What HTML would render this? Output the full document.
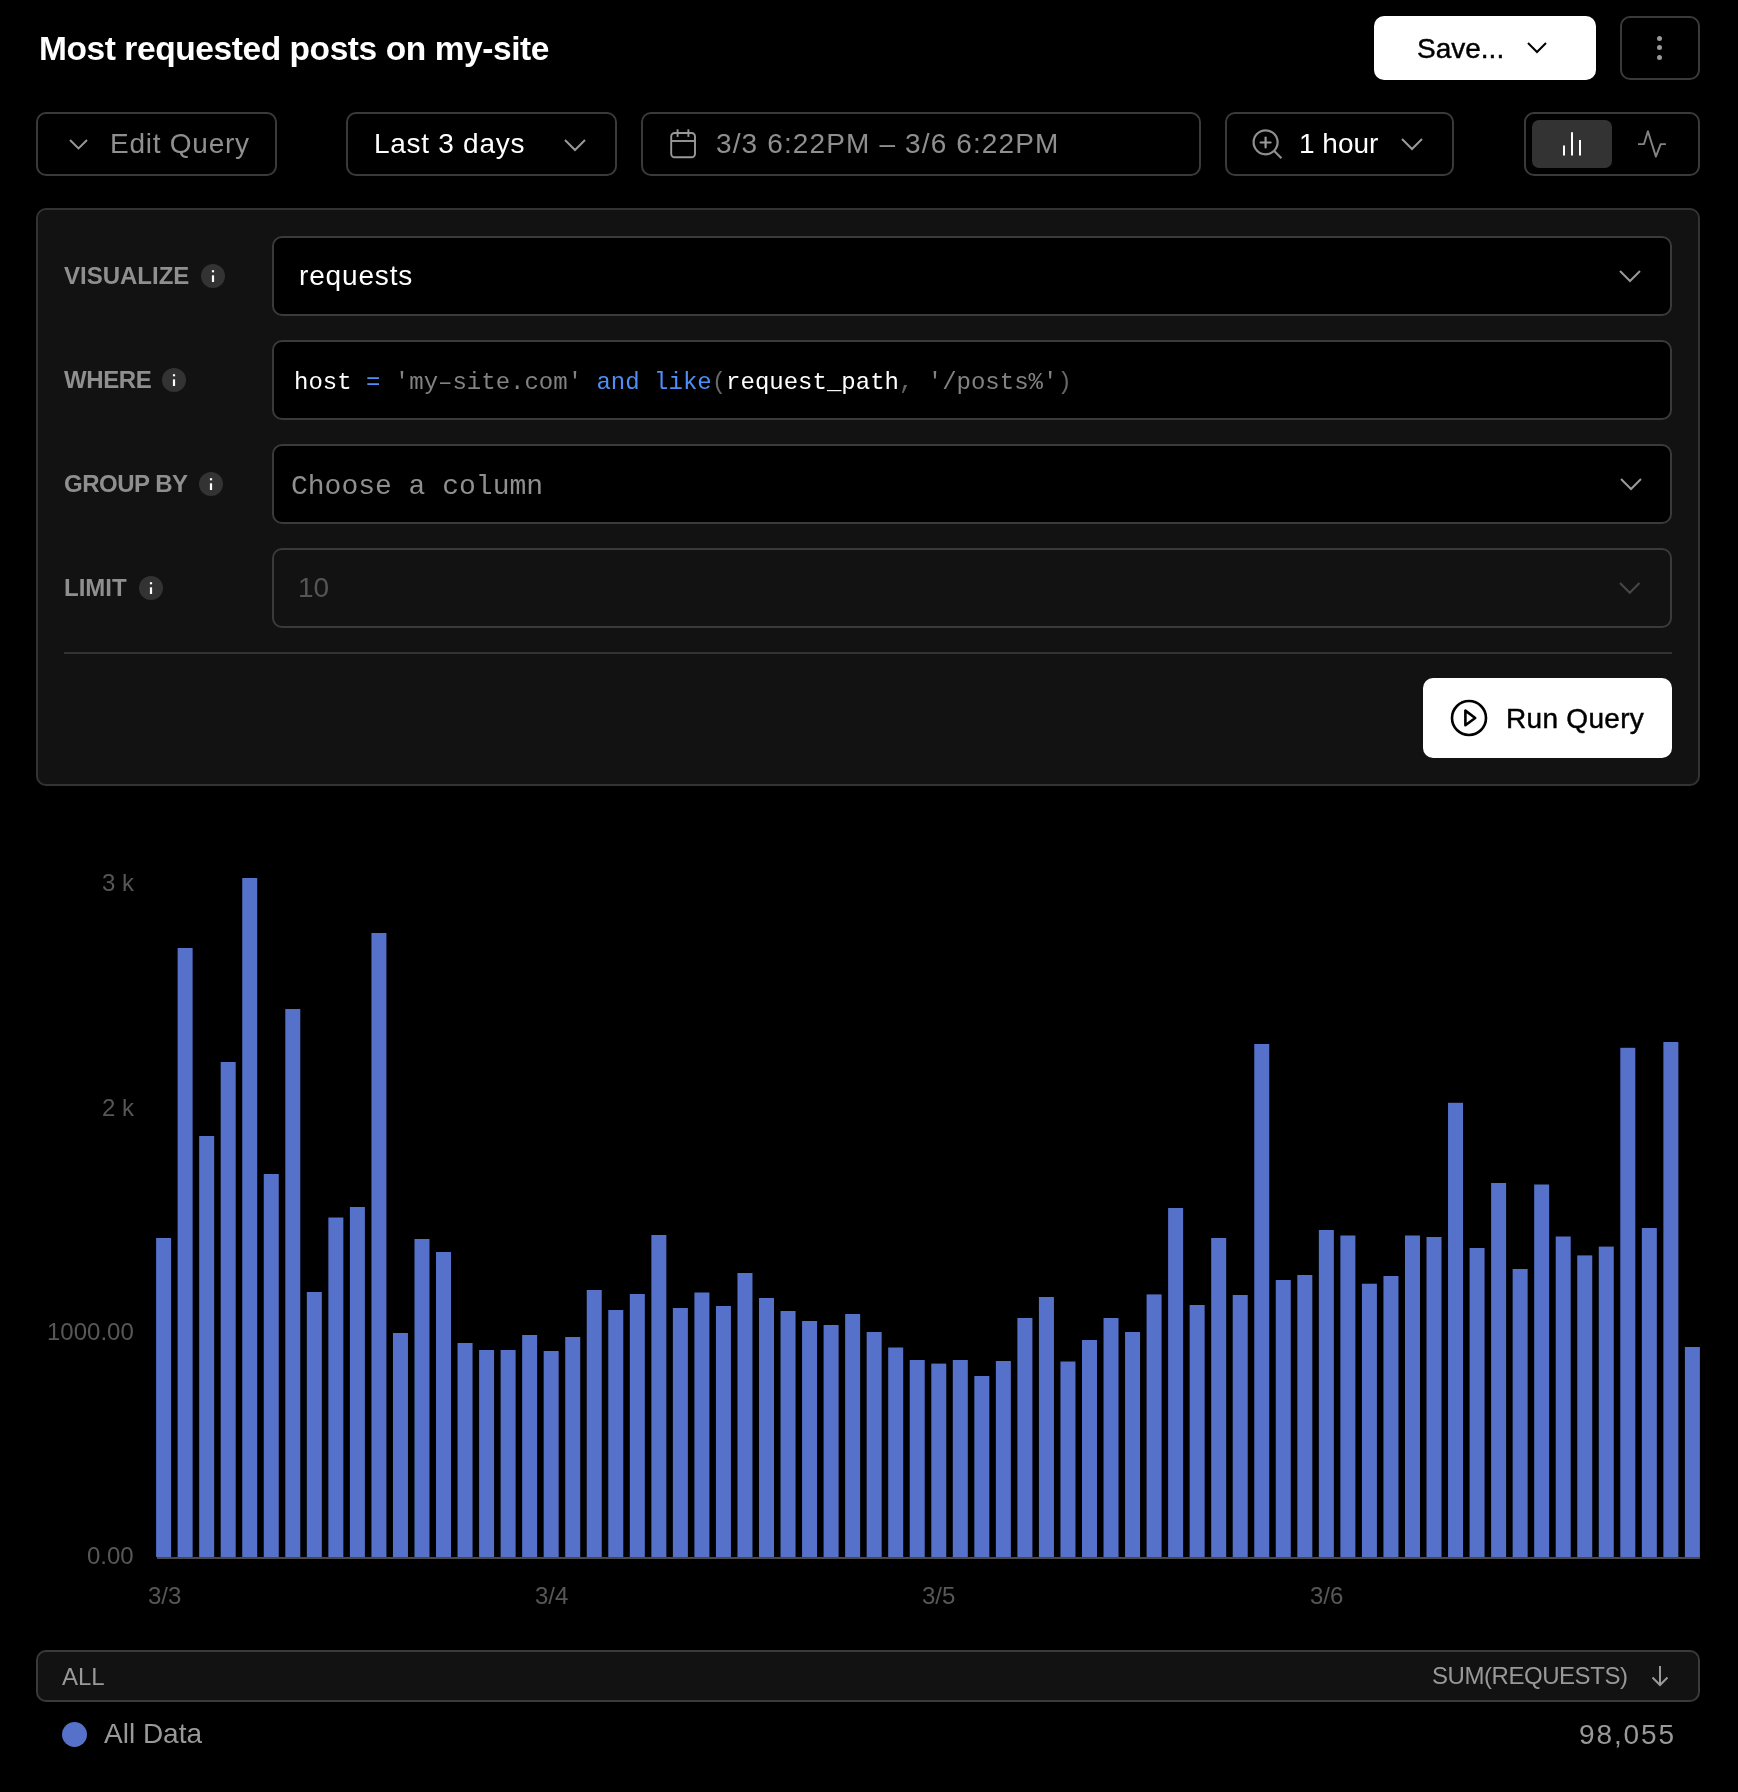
<!DOCTYPE html>
<html><head><meta charset="utf-8"><style>
html,body{margin:0;padding:0;background:#000;font-family:'Liberation Sans',sans-serif;width:1738px;height:1792px;overflow:hidden;position:relative}
.t{position:absolute;white-space:pre;will-change:transform}
.b{position:absolute;box-sizing:border-box}
.s{position:absolute;overflow:visible}
</style></head><body>
<div class="t" style="left:38.5px;top:28.69px;font-size:33.5px;line-height:40px;color:#fff;font-weight:700;font-family:'Liberation Sans', sans-serif;letter-spacing:-0.42px;">Most requested posts on my-site</div>
<div class="b" style="left:1374px;top:16px;width:222px;height:64px;background:#fff;border:none;border-radius:10px;"></div>
<div class="t" style="left:1417px;top:31.59px;font-size:28px;line-height:34px;color:#000;font-weight:400;font-family:'Liberation Sans', sans-serif;-webkit-text-stroke:0.45px #000;">Save...</div>
<svg class="s" style="left:1526.0px;top:41.3px" width="22" height="13"><polyline points="2,2 11.0,11 20,2" fill="none" stroke="#000" stroke-width="2"/></svg>
<div class="b" style="left:1620px;top:16px;width:80px;height:64px;background:transparent;border:2px solid #3a3a3a;border-radius:10px;"></div>
<div class="b" style="left:1657.2px;top:36.2px;width:5px;height:5px;border-radius:50%;background:#999"></div>
<div class="b" style="left:1657.2px;top:45.3px;width:5px;height:5px;border-radius:50%;background:#999"></div>
<div class="b" style="left:1657.2px;top:54.9px;width:5px;height:5px;border-radius:50%;background:#999"></div>
<div class="b" style="left:36px;top:112px;width:241px;height:64px;background:transparent;border:2px solid #3a3a3a;border-radius:10px;"></div>
<svg class="s" style="left:67.5px;top:137.75px" width="21" height="12.5"><polyline points="2,2 10.5,10.5 19,2" fill="none" stroke="#999" stroke-width="1.9"/></svg>
<div class="t" style="left:110px;top:127.29px;font-size:28px;line-height:34px;color:#8f8f8f;font-weight:400;font-family:'Liberation Sans', sans-serif;letter-spacing:0.75px;">Edit Query</div>
<div class="b" style="left:346px;top:112px;width:271px;height:64px;background:transparent;border:2px solid #3a3a3a;border-radius:10px;"></div>
<div class="t" style="left:373.5px;top:126.99px;font-size:28px;line-height:34px;color:#fff;font-weight:400;font-family:'Liberation Sans', sans-serif;letter-spacing:0.72px;">Last 3 days</div>
<svg class="s" style="left:563.0px;top:137.5px" width="24" height="14"><polyline points="2,2 12.0,12 22,2" fill="none" stroke="#999" stroke-width="2"/></svg>
<div class="b" style="left:641px;top:112px;width:560px;height:64px;background:transparent;border:2px solid #3a3a3a;border-radius:10px;"></div>
<svg class="s" style="left:668px;top:128px" width="30" height="32"><rect x="3.2" y="5" width="23.8" height="24.3" rx="3.5" fill="none" stroke="#999" stroke-width="1.9"/><line x1="3.2" y1="13" x2="27" y2="13" stroke="#999" stroke-width="1.9"/><line x1="9.6" y1="1.3" x2="9.6" y2="8.9" stroke="#999" stroke-width="1.9"/><line x1="20.4" y1="1.3" x2="20.4" y2="8.9" stroke="#999" stroke-width="1.9"/></svg>
<div class="t" style="left:716px;top:127.29px;font-size:28px;line-height:34px;color:#8f8f8f;font-weight:400;font-family:'Liberation Sans', sans-serif;letter-spacing:1.13px;">3/3 6:22PM – 3/6 6:22PM</div>
<div class="b" style="left:1225px;top:112px;width:229px;height:64px;background:transparent;border:2px solid #3a3a3a;border-radius:10px;"></div>
<svg class="s" style="left:1248px;top:125px" width="38" height="38"><circle cx="17.6" cy="17.3" r="12" fill="none" stroke="#8f8f8f" stroke-width="2.2"/><line x1="26" y1="25.7" x2="33.5" y2="33.2" stroke="#8f8f8f" stroke-width="2.2"/><line x1="12.6" y1="17.5" x2="22.6" y2="17.5" stroke="#999" stroke-width="2.2" stroke-linecap="round"/><line x1="17.6" y1="12.5" x2="17.6" y2="22.5" stroke="#999" stroke-width="2.2" stroke-linecap="round"/></svg>
<div class="t" style="left:1299px;top:127.29px;font-size:28px;line-height:34px;color:#fff;font-weight:400;font-family:'Liberation Sans', sans-serif;">1 hour</div>
<svg class="s" style="left:1400.0px;top:137.0px" width="24" height="14"><polyline points="2,2 12.0,12 22,2" fill="none" stroke="#999" stroke-width="2"/></svg>
<div class="b" style="left:1524px;top:112px;width:176px;height:64px;background:transparent;border:2px solid #3a3a3a;border-radius:10px;"></div>
<div class="b" style="left:1532px;top:120px;width:80px;height:48px;background:#333;border:none;border-radius:7px;"></div>
<svg class="s" style="left:1555px;top:128px" width="34" height="32"><line x1="9" y1="17.5" x2="9" y2="27.6" stroke="#fff" stroke-width="2"/><line x1="17" y1="4.3" x2="17" y2="27.6" stroke="#fff" stroke-width="2"/><line x1="25" y1="12.1" x2="25" y2="27.6" stroke="#fff" stroke-width="2"/></svg>
<svg class="s" style="left:1630px;top:124px" width="44" height="40"><polyline points="8,20.1 14,20.1 17.9,7.2 25.9,32.6 30.7,20.1 35.9,20.1" fill="none" stroke="#858585" stroke-width="1.9" stroke-linejoin="round"/></svg>
<div class="b" style="left:36px;top:208px;width:1664px;height:578px;background:#121212;border:2px solid #333;border-radius:10px;"></div>
<div class="t" style="left:64px;top:261.38px;font-size:24px;line-height:29px;color:#8f8f8f;font-weight:700;font-family:'Liberation Sans', sans-serif;">VISUALIZE</div>
<div class="t" style="left:64px;top:365.38px;font-size:24px;line-height:29px;color:#8f8f8f;font-weight:700;font-family:'Liberation Sans', sans-serif;letter-spacing:-0.4px;">WHERE</div>
<div class="t" style="left:64px;top:469.38px;font-size:24px;line-height:29px;color:#8f8f8f;font-weight:700;font-family:'Liberation Sans', sans-serif;letter-spacing:-0.5px;">GROUP BY</div>
<div class="t" style="left:64px;top:573.38px;font-size:24px;line-height:29px;color:#8f8f8f;font-weight:700;font-family:'Liberation Sans', sans-serif;">LIMIT</div>
<div class="b" style="left:201px;top:264px;width:24px;height:24px;border-radius:50%;background:#333"></div><svg class="s" style="left:201px;top:264px" width="24" height="24"><rect x="10.9" y="6.2" width="2.2" height="2.1" fill="#fff"/><rect x="10.9" y="11.3" width="2.2" height="6.7" fill="#fff"/></svg>
<div class="b" style="left:162px;top:368px;width:24px;height:24px;border-radius:50%;background:#333"></div><svg class="s" style="left:162px;top:368px" width="24" height="24"><rect x="10.9" y="6.2" width="2.2" height="2.1" fill="#fff"/><rect x="10.9" y="11.3" width="2.2" height="6.7" fill="#fff"/></svg>
<div class="b" style="left:199px;top:472px;width:24px;height:24px;border-radius:50%;background:#333"></div><svg class="s" style="left:199px;top:472px" width="24" height="24"><rect x="10.9" y="6.2" width="2.2" height="2.1" fill="#fff"/><rect x="10.9" y="11.3" width="2.2" height="6.7" fill="#fff"/></svg>
<div class="b" style="left:139px;top:576px;width:24px;height:24px;border-radius:50%;background:#333"></div><svg class="s" style="left:139px;top:576px" width="24" height="24"><rect x="10.9" y="6.2" width="2.2" height="2.1" fill="#fff"/><rect x="10.9" y="11.3" width="2.2" height="6.7" fill="#fff"/></svg>
<div class="b" style="left:272px;top:236px;width:1400px;height:80px;background:#000;border:2px solid #3a3a3a;border-radius:10px;"></div>
<div class="t" style="left:299px;top:259.29px;font-size:28px;line-height:34px;color:#fff;font-weight:400;font-family:'Liberation Sans', sans-serif;letter-spacing:0.85px;">requests</div>
<svg class="s" style="left:1618.0px;top:269.0px" width="24" height="14"><polyline points="2,2 12.0,12 22,2" fill="none" stroke="#999" stroke-width="2"/></svg>
<div class="b" style="left:272px;top:340px;width:1400px;height:80px;background:#000;border:2px solid #3a3a3a;border-radius:10px;"></div>
<div class="t" style="left:294px;top:368.41px;font-size:24px;line-height:29px;color:#fff;font-weight:400;font-family:'Liberation Mono', monospace;"><span style="color:#fff">host</span> <span style="color:#4e8ef7">=</span> <span style="color:#828282">'my&#8211;site.com'</span> <span style="color:#4e8ef7">and</span> <span style="color:#4e8ef7">like</span><span style="color:#666">(</span><span style="color:#fff">request_path</span><span style="color:#666">,</span> <span style="color:#828282">'/posts%'</span><span style="color:#666">)</span></div>
<div class="b" style="left:272px;top:444px;width:1400px;height:80px;background:#000;border:2px solid #3a3a3a;border-radius:10px;"></div>
<div class="t" style="left:291px;top:469.55px;font-size:28px;line-height:34px;color:#8f8f8f;font-weight:400;font-family:'Liberation Mono', monospace;">Choose a column</div>
<svg class="s" style="left:1619.0px;top:477.0px" width="24" height="14"><polyline points="2,2 12.0,12 22,2" fill="none" stroke="#999" stroke-width="2"/></svg>
<div class="b" style="left:272px;top:548px;width:1400px;height:80px;background:#121212;border:2px solid #3a3a3a;border-radius:10px;"></div>
<div class="t" style="left:298px;top:571.29px;font-size:28px;line-height:34px;color:#555;font-weight:400;font-family:'Liberation Sans', sans-serif;">10</div>
<svg class="s" style="left:1618.25px;top:580.6px" width="23.5" height="13.8"><polyline points="2,2 11.75,11.8 21.5,2" fill="none" stroke="#474747" stroke-width="2.1"/></svg>
<div class="b" style="left:64px;top:652px;width:1608px;height:2px;background:#333"></div>
<div class="b" style="left:1423px;top:678px;width:249px;height:80px;background:#fff;border:none;border-radius:10px;"></div>
<svg class="s" style="left:1448px;top:697px" width="42" height="42"><circle cx="21" cy="21" r="17" fill="none" stroke="#000" stroke-width="2.6"/><polygon points="17.4,13.6 17.4,28.2 27.2,21" fill="none" stroke="#000" stroke-width="2.6" stroke-linejoin="round"/></svg>
<div class="t" style="left:1505.5px;top:701.69px;font-size:28px;line-height:34px;color:#000;font-weight:400;font-family:'Liberation Sans', sans-serif;letter-spacing:0.3px;-webkit-text-stroke:0.45px #000;">Run Query</div>
<svg class="s" style="left:0;top:0" width="1738" height="1792"><rect x="156.10" y="1238" width="15" height="319.00" fill="#5571c9"/><rect x="177.63" y="948" width="15" height="609.00" fill="#5571c9"/><rect x="199.16" y="1136" width="15" height="421.00" fill="#5571c9"/><rect x="220.70" y="1062" width="15" height="495.00" fill="#5571c9"/><rect x="242.23" y="878" width="15" height="679.00" fill="#5571c9"/><rect x="263.76" y="1174" width="15" height="383.00" fill="#5571c9"/><rect x="285.29" y="1009" width="15" height="548.00" fill="#5571c9"/><rect x="306.83" y="1292" width="15" height="265.00" fill="#5571c9"/><rect x="328.36" y="1217.5" width="15" height="339.50" fill="#5571c9"/><rect x="349.89" y="1207" width="15" height="350.00" fill="#5571c9"/><rect x="371.42" y="933" width="15" height="624.00" fill="#5571c9"/><rect x="392.96" y="1333" width="15" height="224.00" fill="#5571c9"/><rect x="414.49" y="1239" width="15" height="318.00" fill="#5571c9"/><rect x="436.02" y="1252" width="15" height="305.00" fill="#5571c9"/><rect x="457.55" y="1343" width="15" height="214.00" fill="#5571c9"/><rect x="479.09" y="1350" width="15" height="207.00" fill="#5571c9"/><rect x="500.62" y="1350" width="15" height="207.00" fill="#5571c9"/><rect x="522.15" y="1335" width="15" height="222.00" fill="#5571c9"/><rect x="543.68" y="1351" width="15" height="206.00" fill="#5571c9"/><rect x="565.22" y="1337" width="15" height="220.00" fill="#5571c9"/><rect x="586.75" y="1290" width="15" height="267.00" fill="#5571c9"/><rect x="608.28" y="1310" width="15" height="247.00" fill="#5571c9"/><rect x="629.81" y="1294" width="15" height="263.00" fill="#5571c9"/><rect x="651.35" y="1235" width="15" height="322.00" fill="#5571c9"/><rect x="672.88" y="1308" width="15" height="249.00" fill="#5571c9"/><rect x="694.41" y="1292.5" width="15" height="264.50" fill="#5571c9"/><rect x="715.94" y="1306" width="15" height="251.00" fill="#5571c9"/><rect x="737.47" y="1273" width="15" height="284.00" fill="#5571c9"/><rect x="759.01" y="1298" width="15" height="259.00" fill="#5571c9"/><rect x="780.54" y="1311" width="15" height="246.00" fill="#5571c9"/><rect x="802.07" y="1321" width="15" height="236.00" fill="#5571c9"/><rect x="823.60" y="1325" width="15" height="232.00" fill="#5571c9"/><rect x="845.14" y="1314" width="15" height="243.00" fill="#5571c9"/><rect x="866.67" y="1332" width="15" height="225.00" fill="#5571c9"/><rect x="888.20" y="1347.5" width="15" height="209.50" fill="#5571c9"/><rect x="909.73" y="1360" width="15" height="197.00" fill="#5571c9"/><rect x="931.27" y="1363.6" width="15" height="193.40" fill="#5571c9"/><rect x="952.80" y="1360" width="15" height="197.00" fill="#5571c9"/><rect x="974.33" y="1376" width="15" height="181.00" fill="#5571c9"/><rect x="995.86" y="1361" width="15" height="196.00" fill="#5571c9"/><rect x="1017.40" y="1318" width="15" height="239.00" fill="#5571c9"/><rect x="1038.93" y="1297" width="15" height="260.00" fill="#5571c9"/><rect x="1060.46" y="1361.5" width="15" height="195.50" fill="#5571c9"/><rect x="1081.99" y="1340" width="15" height="217.00" fill="#5571c9"/><rect x="1103.53" y="1318" width="15" height="239.00" fill="#5571c9"/><rect x="1125.06" y="1332" width="15" height="225.00" fill="#5571c9"/><rect x="1146.59" y="1294.4" width="15" height="262.60" fill="#5571c9"/><rect x="1168.12" y="1208" width="15" height="349.00" fill="#5571c9"/><rect x="1189.65" y="1305" width="15" height="252.00" fill="#5571c9"/><rect x="1211.19" y="1238" width="15" height="319.00" fill="#5571c9"/><rect x="1232.72" y="1295" width="15" height="262.00" fill="#5571c9"/><rect x="1254.25" y="1044" width="15" height="513.00" fill="#5571c9"/><rect x="1275.78" y="1280" width="15" height="277.00" fill="#5571c9"/><rect x="1297.32" y="1275" width="15" height="282.00" fill="#5571c9"/><rect x="1318.85" y="1230" width="15" height="327.00" fill="#5571c9"/><rect x="1340.38" y="1235.5" width="15" height="321.50" fill="#5571c9"/><rect x="1361.91" y="1283.7" width="15" height="273.30" fill="#5571c9"/><rect x="1383.45" y="1276" width="15" height="281.00" fill="#5571c9"/><rect x="1404.98" y="1235.5" width="15" height="321.50" fill="#5571c9"/><rect x="1426.51" y="1237" width="15" height="320.00" fill="#5571c9"/><rect x="1448.04" y="1102.8" width="15" height="454.20" fill="#5571c9"/><rect x="1469.58" y="1248" width="15" height="309.00" fill="#5571c9"/><rect x="1491.11" y="1183" width="15" height="374.00" fill="#5571c9"/><rect x="1512.64" y="1269" width="15" height="288.00" fill="#5571c9"/><rect x="1534.17" y="1184.5" width="15" height="372.50" fill="#5571c9"/><rect x="1555.71" y="1236.5" width="15" height="320.50" fill="#5571c9"/><rect x="1577.24" y="1255.4" width="15" height="301.60" fill="#5571c9"/><rect x="1598.77" y="1246.6" width="15" height="310.40" fill="#5571c9"/><rect x="1620.30" y="1047.8" width="15" height="509.20" fill="#5571c9"/><rect x="1641.84" y="1228" width="15" height="329.00" fill="#5571c9"/><rect x="1663.37" y="1042" width="15" height="515.00" fill="#5571c9"/><rect x="1684.90" y="1347" width="15" height="210.00" fill="#5571c9"/><rect x="157" y="1557" width="1543" height="2" fill="#4a4a4a"/></svg>
<div class="t" style="right:1604px;top:868.18px;font-size:24px;line-height:29px;color:#575757;font-weight:400;font-family:'Liberation Sans', sans-serif;">3 k</div>
<div class="t" style="right:1604px;top:1092.68px;font-size:24px;line-height:29px;color:#575757;font-weight:400;font-family:'Liberation Sans', sans-serif;">2 k</div>
<div class="t" style="right:1604px;top:1317.18px;font-size:24px;line-height:29px;color:#575757;font-weight:400;font-family:'Liberation Sans', sans-serif;">1000.00</div>
<div class="t" style="right:1604px;top:1541.18px;font-size:24px;line-height:29px;color:#575757;font-weight:400;font-family:'Liberation Sans', sans-serif;">0.00</div>
<div class="t" style="left:147.7px;top:1581.18px;font-size:24px;line-height:29px;color:#575757;font-weight:400;font-family:'Liberation Sans', sans-serif;">3/3</div>
<div class="t" style="left:535px;top:1581.18px;font-size:24px;line-height:29px;color:#575757;font-weight:400;font-family:'Liberation Sans', sans-serif;">3/4</div>
<div class="t" style="left:922px;top:1581.18px;font-size:24px;line-height:29px;color:#575757;font-weight:400;font-family:'Liberation Sans', sans-serif;">3/5</div>
<div class="t" style="left:1310px;top:1581.18px;font-size:24px;line-height:29px;color:#575757;font-weight:400;font-family:'Liberation Sans', sans-serif;">3/6</div>
<div class="b" style="left:36px;top:1650px;width:1664px;height:52px;background:#121212;border:2px solid #3a3a3a;border-radius:10px;"></div>
<div class="t" style="left:62px;top:1661.68px;font-size:24px;line-height:29px;color:#999;font-weight:400;font-family:'Liberation Sans', sans-serif;">ALL</div>
<div class="t" style="right:110.45000000000005px;top:1661.18px;font-size:24px;line-height:29px;color:#999;font-weight:400;font-family:'Liberation Sans', sans-serif;letter-spacing:-0.45px;">SUM(REQUESTS)</div>
<svg class="s" style="left:1648px;top:1663px" width="26" height="26"><line x1="12" y1="3" x2="12" y2="22" stroke="#999" stroke-width="2"/><polyline points="4.5,14.5 12,22 19.5,14.5" fill="none" stroke="#999" stroke-width="2"/></svg>
<div class="b" style="left:61.6px;top:1721.5px;width:25px;height:25px;border-radius:50%;background:#5571c9"></div>
<div class="t" style="left:104px;top:1717.29px;font-size:28px;line-height:34px;color:#999;font-weight:400;font-family:'Liberation Sans', sans-serif;">All Data</div>
<div class="t" style="right:62.09999999999991px;top:1718.09px;font-size:28px;line-height:34px;color:#999;font-weight:400;font-family:'Liberation Sans', sans-serif;letter-spacing:1.9px;">98,055</div>
</body></html>
